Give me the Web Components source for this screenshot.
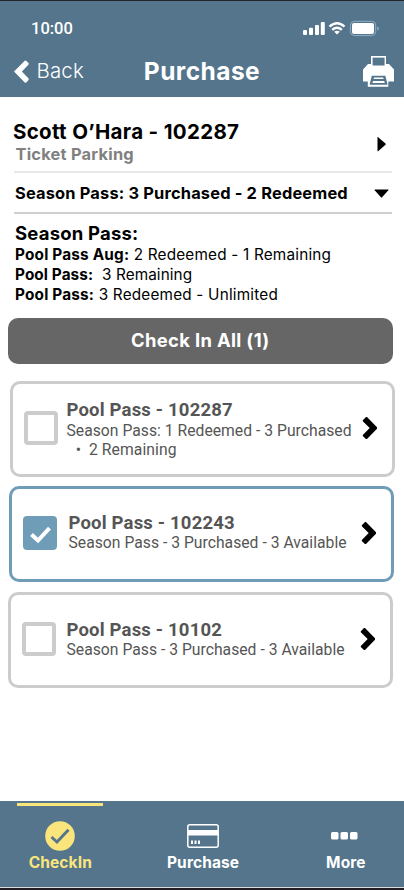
<!DOCTYPE html>
<html lang="en"><head><meta charset="utf-8"><title>Purchase</title>
<style>html,body{margin:0;background:#fff}</style></head><body>
<pass-app></pass-app>
<script>
const define=(name,html)=>{
  const t=document.createElement('template');
  t.innerHTML='<style>:host{display:block;box-sizing:border-box}*{box-sizing:border-box}svg{display:block;flex:none}.t{white-space:pre;font-optical-sizing:none!important}</style>'+html;
  customElements.define(name,class extends HTMLElement{
    constructor(){super();this.attachShadow({mode:'open'}).append(t.content.cloneNode(true));}
  });
};
define('status-bar',`<style>:host{display:flex;justify-content:space-between;height:47px;padding:16px 24px 0 31px;color:#fff}
.t{font:500 16.5px/23px Roboto,sans-serif}svg{margin-top:3px}</style>
<span class="t">10:00</span>
<svg width="77" height="17" viewBox="303 20 77 17"><g fill="#fff"><rect x="303" y="30" width="4" height="5" rx="1"/><rect x="309" y="27.7" width="4" height="7.3" rx="1"/><rect x="315" y="25" width="4" height="10" rx="1"/><rect x="320.8" y="22" width="4" height="13" rx="1"/><rect x="352" y="23" width="22" height="11" rx="2"/></g>
<g fill="none" stroke="#fff" stroke-width="2.4"><path d="M329.5 26.6Q337 19.8 344.5 26.6M332.2 29.8Q337 25.6 341.8 29.8"/></g><path d="M334.2 31.8Q337 29.7 339.8 31.8L337 34.6Z" fill="#fff"/><rect x="350.4" y="21.3" width="25.3" height="14.3" rx="4" fill="none" stroke="#8db1c6"/><path d="M377.3 26.5Q379 27 379 28.5T377.3 30.5Z" fill="#8db1c6"/></svg>`);
define('nav-header',`<style>:host{display:grid;grid-template-columns:1fr auto 1fr;height:49px;align-items:start;padding:0 10px;color:#fff;font-family:Inter,sans-serif}
.back{display:flex;gap:7.5px;padding-left:4px}.back svg{margin-top:12px}.back .t{font-size:20.5px;line-height:28px;margin-top:9px;font-weight:300;letter-spacing:.15px}.title{font-size:24.5px;line-height:30px;font-weight:700;letter-spacing:.45px;margin-top:8px}.print{justify-self:end;margin-top:8px}</style>
<div class="back"><svg width="15" height="23" viewBox="0 0 15 23"><path d="M0 11.5L11 .5Q12 0 14.6 3V4.6L7.9 11.5L14.6 18.4V20L12 22.8H11Z" fill="#fff"/></svg><span class="t">Back</span></div><span class="t title">Purchase</span>
<svg class="print" width="31" height="32" viewBox="363 56 31 32"><path d="M371 56H386V64H389L394 69.5V81.5H388.3V86.8H367.8V81.5H363V69.5L368 64H371Z" fill="#fff"/><path d="M372.6 57.6H384.6V65.5H372.6Z" fill="#54758c"/><path d="M371.8 75.7H385.4L387.6 84.8H369.6Z" fill="#54758c"/><path d="M374 77.6H383.2L383.6 79H373.6ZM373 81H384.2L384.8 83H372.4Z" fill="#fff"/></svg>`);
define('customer-row',`<style>:host{display:flex;justify-content:space-between;height:74px;padding:21px 18px 0 13px;font-family:Inter,sans-serif;font-weight:650}
.n{font-size:20.5px;line-height:28px;letter-spacing:.32px}.s{font-size:16.4px;line-height:18px;letter-spacing:.23px;color:#808080;margin:-1px 0 0 2.5px}svg{margin-top:18px}</style><div><div class="t n"><slot name="name"></slot></div><div class="t s"><slot name="kind"></slot></div></div><svg width="10" height="16"><path d="M1.5 1.5Q1.5 .8 2.1 1.3L9.5 7.6Q10 8.2 9.5 8.8L2.1 15.2Q1.5 15.6 1.5 15Z"/></svg>`);
define('summary-row',`<style>:host{display:flex;align-items:center;justify-content:space-between;height:43px;margin:0 12px 0 14px;padding:0 3.5px 0 1px;border-top:2px solid #e8e8e8;border-bottom:2px solid #cfcfcf}
.t{font:650 16.4px/22px Inter,sans-serif;letter-spacing:.18px}svg{margin-top:2px}</style><span class="t"><slot></slot></span><svg width="15" height="9"><path d="M1 .5H14Q14.8.6 14.3 1.2L8.1 8.2Q7.5 8.7 6.9 8.2L.7 1.2Q.2.6 1 .5Z"/></svg>`);
define('pass-summary',`<style>:host{height:104px;padding:7px 0 0 15px;font:400 15.3px/20px Inter,sans-serif}
.t{letter-spacing:.2px}.h{font-size:18.5px;font-weight:700;line-height:24px}.m{letter-spacing:.1px}b{font-weight:700}</style><div class="t h">Season Pass:</div><div class="t"><b>Pool Pass Aug:</b> 2 Redeemed - 1 Remaining</div><div class="t m"><b>Pool Pass:</b>  3 Remaining</div><div class="t"><b>Pool Pass:</b> 3 Redeemed - Unlimited</div>`);
define('primary-button',`<style>:host{display:flex;justify-content:center;align-items:center;height:46px;padding-bottom:2px;margin:0 11px 0 7.5px;background:#666;border-radius:10px;color:#fff}.t{font:700 18.4px/24px Inter,sans-serif;letter-spacing:.35px}</style><span class="t"><slot></slot></span>`);
define('pass-card',`<style>:host{display:flex;width:385px;height:96px;border:3px solid #ccc;border-radius:10px;color:#555;font:400 15.7px/19px Roboto,sans-serif;margin-left:var(--x)}
:host([checked]){border-color:#6f9db8}
.box{width:34px;height:34px;border:4px solid #ccc;border-radius:4px;margin:27px 0 0 11px;flex:none}.box svg{display:none}
:host([checked]) .box{background:#6f9db8;border-color:#6f9db8}:host([checked]) .box svg{display:block}
.c{flex:1;margin:var(--ct,16px) 0 0 var(--cg,8.5px)}.t{letter-spacing:.02px}.n{font-size:18.5px;font-weight:700;line-height:var(--nl,20px);height:20px;letter-spacing:.18px}.e{padding-left:1.2px;letter-spacing:.08px}.chev{margin:32px 14px 0 0}</style>
<div class="box"><svg width="26" height="26" viewBox="27 520 26 26"><path d="M31.5 534.5L38 540.5L49.5 528.2" fill="none" stroke="#fff" stroke-width="4"/></svg></div>
<div class="c"><div class="t n"><slot name="name"></slot></div><div class="t"><slot name="detail"></slot></div><div class="t e"><slot name="extra"></slot></div></div>
<svg class="chev" width="16" height="24" viewBox="0 0 16 24"><path d="M.8 4.3L4 1H5L15 11.2V12.8L5 23H4L.8 19.9V19L7.7 12L.8 5.2Z"/></svg>`);
define('tab-item',`<style>:host{display:flex;flex-direction:column;align-items:center;color:#fff}:host([active]){color:#fae57c}
i{display:block;width:86px;height:3px;margin-top:2px}:host([active]) i{background:#fae57c}.ic{height:30px;margin-top:14.5px;display:flex;align-items:center}.t{font:700 15.5px/22px Inter,sans-serif;letter-spacing:.12px;margin:1px 0 0 .6px}</style><i></i><div class="ic"><slot name="icon"></slot></div><span class="t"><slot></slot></span>`);
define('tab-bar',`<style>:host{display:grid;grid-template-columns:86px 86px 86px;column-gap:56.8px;padding-left:17px;height:89px;background:linear-gradient(#54758c 86px,#d8dde0 86px,#d8dde0 87px,#211d22 87px)}</style><slot></slot>`);
define('pass-app',`<style>:host{width:404px;height:890px;display:flex;flex-direction:column;color:#000}header{background:#54758c;border-top:1px solid #25232a;height:97px;flex:none}.cards{display:grid;gap:9.5px;margin-top:16.5px}main{flex:1}</style>
<header><status-bar></status-bar><nav-header></nav-header></header>
<main><customer-row><span slot="name">Scott O’Hara - 102287</span><span slot="kind">Ticket Parking</span></customer-row>
<summary-row>Season Pass: 3 Purchased - 2 Redeemed</summary-row><pass-summary></pass-summary><primary-button>Check In All (1)</primary-button>
<div class="cards"><pass-card style="--x:10px;--ct:17px;--nl:19px"><span slot="name">Pool Pass - 102287</span><span slot="detail">Season Pass: 1 Redeemed - 3 Purchased</span><span slot="extra">  •  2 Remaining</span></pass-card>
<pass-card checked style="--x:9px;--ct:24px;--cg:11.5px"><span slot="name">Pool Pass - 102243</span><span slot="detail">Season Pass - 3 Purchased - 3 Available</span></pass-card>
<pass-card style="--x:8px;--ct:25px;--cg:10.5px"><span slot="name">Pool Pass - 10102</span><span slot="detail">Season Pass - 3 Purchased - 3 Available</span></pass-card></div></main>
<tab-bar><tab-item active><svg slot="icon" width="30" height="30"><circle cx="15" cy="15" r="14.8" fill="#fae57c"/><path d="M6.5 16L12 21L23.5 8.8" fill="none" stroke="#54758c" stroke-width="3"/></svg>CheckIn</tab-item>
<tab-item><svg slot="icon" width="32" height="24"><rect x=".8" y=".8" width="30.4" height="22.4" rx="2" fill="none" stroke="#fff" stroke-width="1.5"/><path d="M1 6H31V11.5H1ZM4 16.5H6V20H4ZM7.5 16.5H9.5V20H7.5ZM11 16.5H13V20H11Z" fill="#fff"/></svg>Purchase</tab-item>
<tab-item><svg slot="icon" width="30" height="8"><g fill="#fff"><rect width="7.5" height="7.5" rx="1.5"/><rect x="9.5" width="7.5" height="7.5" rx="1.5"/><rect x="19" width="7.5" height="7.5" rx="1.5"/></g></svg>More</tab-item></tab-bar>`);
</script></body></html>
